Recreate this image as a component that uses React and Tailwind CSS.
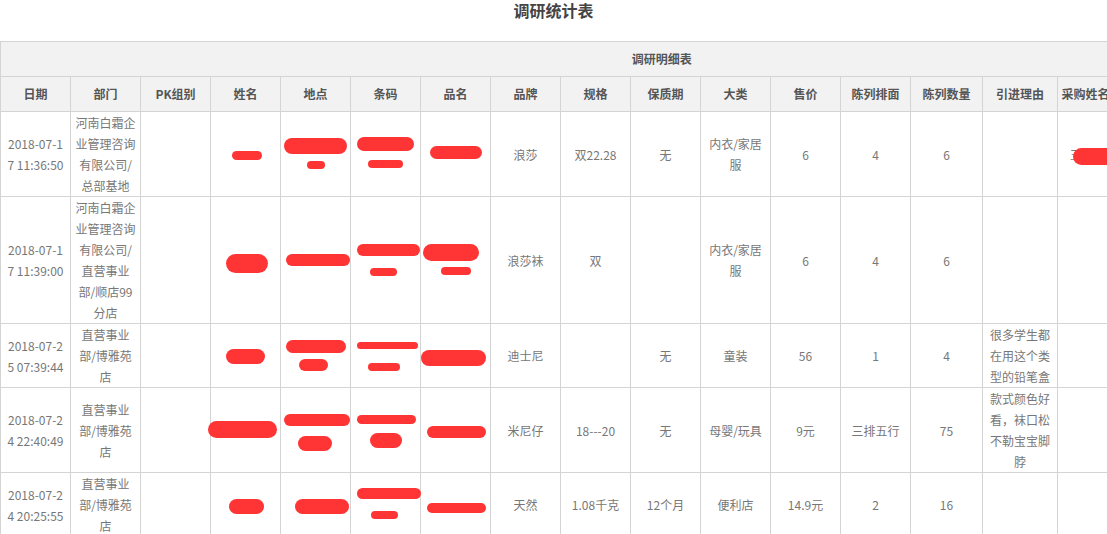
import React from 'react';

const COLS = [
  { name: '日期', w: 70 },
  { name: '部门', w: 70 },
  { name: 'PK组别', w: 70 },
  { name: '姓名', w: 70 },
  { name: '地点', w: 70 },
  { name: '条码', w: 70 },
  { name: '品名', w: 70 },
  { name: '品牌', w: 70 },
  { name: '规格', w: 70 },
  { name: '保质期', w: 70 },
  { name: '大类', w: 70 },
  { name: '售价', w: 70 },
  { name: '陈列排面', w: 70 },
  { name: '陈列数量', w: 72 },
  { name: '引进理由', w: 75 },
  { name: '采购姓名', w: 56 },
  { name: '采购意见', w: 104 },
  { name: '备注', w: 105 },
];

// redaction marks: [left, top, width, height] inside the cell
const ROWS = [
  {
    date: ['2018-07-1', '7 11:36:50'],
    dept: ['河南白霜企', '业管理咨询', '有限公司/', '总部基地'],
    name: [[21, 39, 30, 9]],
    place: [[3, 26, 63, 16], [26, 49, 18, 8]],
    code: [[6, 25, 57, 14], [17, 48, 35, 8]],
    item: [[9, 34, 52, 13]],
    brand: ['浪莎'], spec: ['双22.28'], life: ['无'], cat: ['内衣/家居', '服'],
    price: ['6'], face: ['4'], qty: ['6'], reason: [],
    buyer: true,
  },
  {
    date: ['2018-07-1', '7 11:39:00'],
    dept: ['河南白霜企', '业管理咨询', '有限公司/', '直营事业', '部/顺店99', '分店'],
    name: [[15, 57, 42, 19]],
    place: [[5, 57, 64, 12]],
    code: [[6, 47, 63, 12], [19, 71, 27, 8]],
    item: [[2, 47, 56, 17], [20, 70, 30, 8]],
    brand: ['浪莎袜'], spec: ['双'], life: [], cat: ['内衣/家居', '服'],
    price: ['6'], face: ['4'], qty: ['6'], reason: [],
  },
  {
    date: ['2018-07-2', '5 07:39:44'],
    dept: ['直营事业', '部/博雅苑', '店'],
    name: [[15, 25, 39, 15]],
    place: [[5, 16, 60, 13], [18, 35, 29, 12]],
    code: [[6, 18, 61, 7], [17, 39, 32, 8]],
    item: [[0, 26, 65, 16]],
    brand: ['迪士尼'], spec: [], life: ['无'], cat: ['童装'],
    price: ['56'], face: ['1'], qty: ['4'], reason: ['很多学生都', '在用这个类', '型的铅笔盒'],
  },
  {
    date: ['2018-07-2', '4 22:40:49'],
    dept: ['直营事业', '部/博雅苑', '店'],
    name: [[-3, 33, 69, 17]],
    place: [[3, 26, 66, 12], [17, 48, 34, 15]],
    code: [[6, 27, 59, 9], [19, 45, 32, 15]],
    item: [[6, 38, 59, 12]],
    brand: ['米尼仔'], spec: ['18---20'], life: ['无'], cat: ['母婴/玩具'],
    price: ['9元'], face: ['三排五行'], qty: ['75'], reason: ['款式颜色好', '看，袜口松', '不勒宝宝脚', '脖'],
  },
  {
    date: ['2018-07-2', '4 20:25:55'],
    dept: ['直营事业', '部/博雅苑', '店'],
    name: [[18, 26, 35, 15]],
    place: [[14, 26, 54, 15]],
    code: [[6, 15, 64, 11], [20, 38, 27, 8]],
    item: [[6, 30, 59, 10]],
    brand: ['天然'], spec: ['1.08千克'], life: ['12个月'], cat: ['便利店'],
    price: ['14.9元'], face: ['2'], qty: ['16'], reason: [],
  },
];

function Lines({ lines }) {
  return lines.map((l, i) => (
    <React.Fragment key={i}>
      {i > 0 && <br />}
      {l}
    </React.Fragment>
  ));
}

function Cell({ lines = [] }) {
  return (
    <td className="whitespace-nowrap border border-[#d4d4d4] px-[4px] py-0 text-center align-middle">
      <Lines lines={lines} />
    </td>
  );
}

function MarkCell({ marks }) {
  return (
    <td className="relative border border-[#d4d4d4] px-[4px] py-0">
      {marks.map((m, i) => (
        <span
          key={i}
          className="absolute rounded-full bg-[#ff3535]"
          style={{ left: m[0], top: m[1], width: m[2], height: m[3] }}
        />
      ))}
    </td>
  );
}

export default function App() {
  return (
    <div className="h-[534px] w-[1107px] overflow-hidden bg-white font-['Noto_Sans_CJK_SC','Microsoft_YaHei',sans-serif] text-[12px] text-[#777]">
      <h1 className="h-[20px] text-center text-[16px] font-bold leading-[20px] text-[#444]">调研统计表</h1>
      <table className="mt-[21px] w-[1322px] table-fixed border-collapse">
        <colgroup>
          {COLS.map(c => <col key={c.name} style={{ width: c.w }} />)}
        </colgroup>
        <thead>
          <tr className="h-[35px] bg-[#f2f2f2]">
            <th colSpan={COLS.length} className="border border-[#d4d4d4] text-center text-[12px] font-bold text-[#555]">调研明细表</th>
          </tr>
          <tr className="h-[35px] bg-[#f2f2f2]">
            {COLS.map(c => (
              <th key={c.name} className="whitespace-nowrap border border-[#d4d4d4] px-[3px] text-center text-[12px] font-bold text-[#555]">{c.name}</th>
            ))}
          </tr>
        </thead>
        <tbody className="leading-[21px]">
          {ROWS.map((r, i) => (
            <tr key={i}>
              <Cell lines={r.date} />
              <Cell lines={r.dept} />
              <Cell />
              <MarkCell marks={r.name} />
              <MarkCell marks={r.place} />
              <MarkCell marks={r.code} />
              <MarkCell marks={r.item} />
              <Cell lines={r.brand} />
              <Cell lines={r.spec} />
              <Cell lines={r.life} />
              <Cell lines={r.cat} />
              <Cell lines={r.price} />
              <Cell lines={r.face} />
              <Cell lines={r.qty} />
              <Cell lines={r.reason} />
              {r.buyer ? (
                <td className="relative whitespace-nowrap border border-[#d4d4d4] px-[4px] py-0 align-middle">
                  <span className="ml-[8px]">王</span>
                  <span className="absolute left-[15px] top-[36px] h-[17px] w-[50px] rounded-full bg-[#ff3535]" />
                </td>
              ) : (
                <Cell />
              )}
              <Cell />
              <Cell />
            </tr>
          ))}
        </tbody>
      </table>
    </div>
  );
}
